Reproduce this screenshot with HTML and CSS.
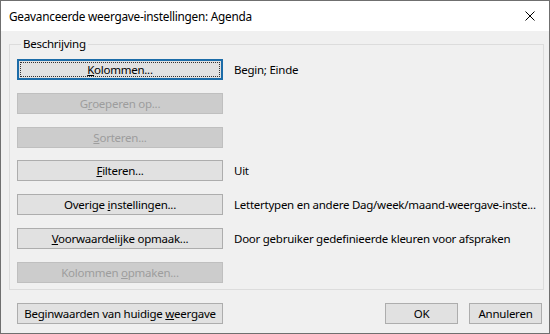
FILE: index.html
```html
<!DOCTYPE html>
<html lang="nl">
<head>
    <meta charset="UTF-8">
    <title>Geavanceerde weergave-instellingen: Agenda</title>
    <link rel="stylesheet" href="styles.css">
</head>
<body>
    <div class="window">
        <div class="titlebar">
            <span class="title">Geavanceerde weergave-instellingen: Agenda</span>
            <button class="close" title="Sluiten">
                <svg width="10" height="10" viewBox="0 0 10 10">
                    <path d="M0.5 0.5 L9.5 9.5 M9.5 0.5 L0.5 9.5" stroke="#000" stroke-width="1" fill="none"/>
                </svg>
            </button>
        </div>

        <div class="content">
            <fieldset class="group">
                <legend>Beschrijving</legend>

                <div class="row">
                    <button class="button focused"><span class="focus-rect"><u>K</u>olommen...</span></button>
                    <span class="value">Begin; Einde</span>
                </div>
                <div class="row">
                    <button class="button" disabled>G<u>r</u>oeperen op...</button>
                </div>
                <div class="row">
                    <button class="button" disabled><u>S</u>orteren...</button>
                </div>
                <div class="row">
                    <button class="button"><u>F</u>ilteren...</button>
                    <span class="value">Uit</span>
                </div>
                <div class="row">
                    <button class="button">Overige <u>i</u>nstellingen...</button>
                    <span class="value">Lettertypen en andere Dag/week/maand-weergave-inste...</span>
                </div>
                <div class="row">
                    <button class="button"><u>V</u>oorwaardelijke opmaak...</button>
                    <span class="value">Door gebruiker gedefinieerde kleuren voor afspraken</span>
                </div>
                <div class="row">
                    <button class="button" disabled>Kolommen <u>o</u>pmaken...</button>
                </div>
            </fieldset>

            <div class="footer">
                <button class="button">Beginwaarden van huidige <u>w</u>eergave</button>
                <div class="actions">
                    <button class="button small">OK</button>
                    <button class="button small">Annuleren</button>
                </div>
            </div>
        </div>
    </div>
</body>
</html>
```

FILE: styles.css
```css
html, body {
    margin: 0;
    padding: 0;
}
body {
    font-family: "Noto Sans", "Open Sans", sans-serif;
    font-size: 11.5px;
    letter-spacing: -0.25px;
    color: #000;
}
.window {
    width: 550px;
    height: 334px;
    box-sizing: border-box;
    border: 1px solid #6f6f6f;
    background: #f0f0f0;
    display: flex;
    flex-direction: column;
}
.titlebar {
    height: 30px;
    background: #fff;
    display: flex;
    align-items: center;
    justify-content: space-between;
    padding-left: 8px;
}
.title {
    font-size: 11.8px;
}
.close {
    width: 30px;
    height: 30px;
    border: none;
    background: transparent;
    display: flex;
    align-items: center;
    justify-content: center;
    padding: 0 8px 0 0;
}
.content {
    flex: 1;
    padding: 5px 6px 0 8px;
    display: flex;
    flex-direction: column;
}
.group {
    margin: 0;
    padding: 7px 7px 6px 7px;
    border: 1px solid #dcdcdc;
}
.group legend {
    padding: 0 2px;
    margin-left: 4px;
    line-height: 16px;
}
.row {
    display: flex;
    align-items: center;
    height: 21px;
    margin-bottom: 12.8px;
}
.row:last-child {
    margin-bottom: 0;
}
.button {
    width: 206px;
    height: 21px;
    box-sizing: border-box;
    background: #e1e1e1;
    border: 1px solid #adadad;
    font-family: inherit;
    font-size: 11.5px;
    letter-spacing: -0.25px;
    color: #000;
    padding: 0;
    line-height: 17px;
    white-space: nowrap;
}
.button:disabled {
    background: #cccccc;
    border-color: #bfbfbf;
    color: #9d9d9d;
}
.button.focused {
    border: 2px solid #1c6ca8;
    padding: 1px;
}
.focus-rect {
    display: block;
    height: 100%;
    box-sizing: border-box;
    border: 1px dotted #333;
    line-height: 13px;
}
.button.small {
    width: 73px;
}
.value {
    margin-left: 11px;
    white-space: nowrap;
}
.footer {
    display: flex;
    justify-content: space-between;
    align-items: center;
    margin-top: 13px;
    padding-left: 8px;
    padding-right: 1px;
}
.actions {
    display: flex;
    gap: 11px;
}
```
